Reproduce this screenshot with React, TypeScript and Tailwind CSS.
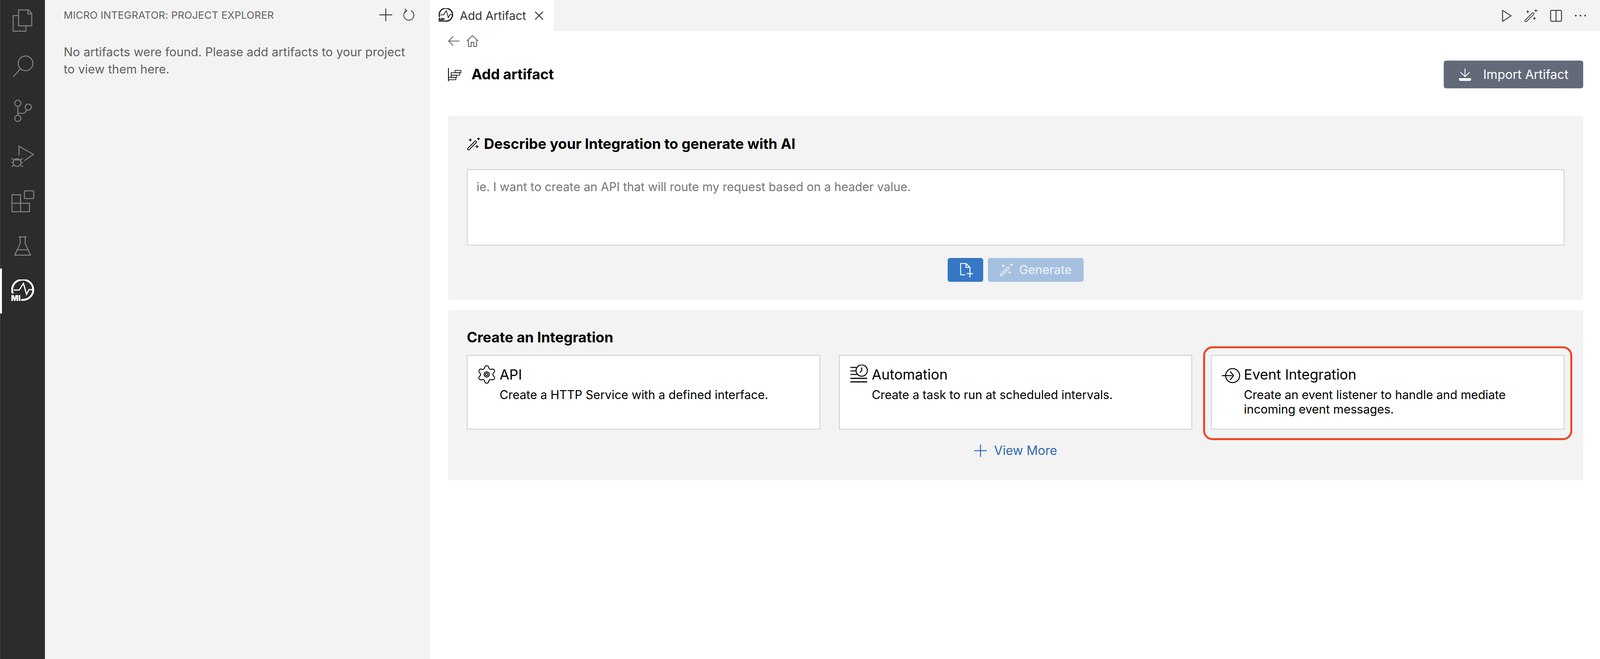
import { Settings } from 'lucide-react';

function MiLogo({ size, color }: { size: number; color: string }) {
  return (
    <svg width={size} height={size} viewBox="0 0 60 60" fill="none" stroke={color}>
      <path d="M4 36A27 26 0 1 1 25 52" strokeWidth="4.800" />
      <path d="M6 27H20L31 10L39 38L45 26H56" strokeWidth="3" />
      <text x="-1" y="55" fontSize="20" fontWeight="900" fontFamily="Inter" fill={color} stroke="none">MI</text>
    </svg>
  );
}

function Wand({ color = 'currentColor' }: { color?: string }) {
  return (
    <svg width="34" height="33" viewBox="0 0 34 33" fill="none" stroke={color} strokeWidth="2" strokeLinecap="round">
      <path d="M2.5 27.5L20.5 9.5Q22.5 8 24 9.5T24 13L6 31Q4 32 2.5 31T2.5 27.5Z" />
      <path d="M9 3V9M6 6H12M30 0.500V6M27 3H33M26 20V26M23 23H29" />
    </svg>
  );
}

const activityIcons = [
  <svg key="files" width="115" height="70" viewBox="0 18 115 70" fill="none" stroke="#858585" strokeWidth="2.500" strokeLinejoin="round">
    <path d="M46 40H33V80H66V66" />
    <path d="M47 25H72L81 34V66H47Z" />
    <path d="M71 25V35H81" />
  </svg>,
  <svg key="search" width="115" height="70" viewBox="0 133 115 70" fill="none" stroke="#858585" strokeWidth="2.500">
    <circle cx="65" cy="160" r="19" />
    <path d="M33 195L52 174" />
  </svg>,
  <svg key="git" width="115" height="70" viewBox="0 249 115 70" fill="none" stroke="#858585" strokeWidth="2.500">
    <circle cx="45" cy="263" r="8" />
    <circle cx="45" cy="302" r="8" />
    <circle cx="72" cy="273" r="8" />
    <path d="M45 271V294M45 289H58Q65 289 67 280" />
  </svg>,
  <svg key="debug" width="115" height="70" viewBox="0 363 115 70" fill="none" stroke="#858585" strokeWidth="2.500">
    <path d="M48 396V372L85 393L62 409" />
    <circle cx="43" cy="414" r="10" />
    <path d="M29 403L36 408M29 414H33M29 425L36 419M58 403L51 408M58 414H53M58 425L51 419M34 407H52" />
  </svg>,
  <svg key="extensions" width="115" height="70" viewBox="0 479 115 70" fill="none" stroke="#858585" strokeWidth="2.500" strokeLinejoin="round">
    <path d="M30 497H52V541H30ZM30 519H75V541H52" />
    <rect x="62" y="487" width="24" height="20" rx="2" />
  </svg>,
  <svg key="testing" width="115" height="70" viewBox="0 594 115 70" fill="none" stroke="#858585" strokeWidth="2.500" strokeLinejoin="round">
    <path d="M47 605H68M51 605V622L37 652H78L64 622V605M44 638H71" />
  </svg>,
];

function ActivityBar() {
  return (
    <div className="flex h-full w-[115px] shrink-0 flex-col border-l border-[#4a4a4a] bg-[#2c2c2c]">
      {activityIcons.map((icon, i) => (
        <div key={i} className={i === 0 ? 'flex h-[112px] items-center justify-center pb-[6px]' : 'flex h-[115px] items-center justify-center'}>
          {icon}
        </div>
      ))}
      <div className="relative flex h-[115px] items-center pl-[28px]">
        <div className="absolute -left-[1px] top-0 h-full w-[5px] bg-white" />
        <MiLogo size={60} color="#ffffff" />
      </div>
    </div>
  );
}

function Sidebar() {
  return (
    <div className="flex h-full w-[985px] shrink-0 flex-col bg-[#f3f3f3] pl-[48px] pr-[39px] text-[#616161]">
      <div className="flex h-[76px] items-center justify-between">
        <span className="text-[26px] tracking-[0.2px]">MICRO INTEGRATOR: PROJECT EXPLORER</span>
        <div className="flex items-center gap-[28px]">
          <svg width="33" height="32" viewBox="0 0 33 32" stroke="#424242" strokeWidth="2.500">
            <path d="M16.500 0V32M0 16H33" />
          </svg>
          <svg width="29" height="32" viewBox="0 0 29 32" fill="none" stroke="#424242" strokeWidth="2.200">
            <path d="M9 5A13 13 0 1 0 20 5" />
            <path d="M4 0.500L9.500 5.500L4 10" />
          </svg>
        </div>
      </div>
      <p className="mt-[35px] w-[890px] text-[31px] leading-[44px]">
        No artifacts were found. Please add artifacts to your project to view them here.
      </p>
    </div>
  );
}

function TabBar() {
  return (
    <div className="flex h-[80px] shrink-0 items-center justify-between bg-[#f3f3f3] pr-[35px]">
      <div className="flex h-full w-[318px] items-center bg-white pl-[23px] text-[#333333]">
        <MiLogo size={38} color="#1a1a1a" />
        <span className="ml-[16px] text-[30px]">Add Artifact</span>
        <svg className="ml-[22px]" width="22" height="22" viewBox="0 0 22 22" stroke="#424242" strokeWidth="2.500">
          <path d="M1 1L21 21M21 1L1 21" />
        </svg>
      </div>
      <div className="flex items-center gap-[32px] text-[#424242]">
        <svg width="25" height="31" viewBox="0 0 25 31" fill="none" stroke="currentColor" strokeWidth="2.500" strokeLinejoin="round">
          <path d="M1.500 1.500L23.500 15.500L1.500 29.500Z" />
        </svg>
        <Wand />
        <svg width="31" height="31" viewBox="0 0 31 31" fill="none" stroke="currentColor" strokeWidth="2.500">
          <rect x="1.500" y="1.500" width="28" height="28" rx="3" />
          <path d="M15.500 1.500V29.500" />
        </svg>
        <svg width="30" height="6" viewBox="0 0 30 6" fill="currentColor">
          <circle cx="3" cy="3" r="2.300" />
          <circle cx="15" cy="3" r="2.300" />
          <circle cx="27" cy="3" r="2.300" />
        </svg>
      </div>
    </div>
  );
}

function ActionCard({ icon, iconClass, title, description, outlined }: {
  icon: React.ReactNode;
  iconClass: string;
  title: string;
  description: string;
  outlined?: boolean;
}) {
  return (
    <div className="relative">
      <div className="flex h-[191px] border-2 border-[#cccccc] bg-white pl-[26px] pt-[26px] text-black">
        <div className={iconClass}>{icon}</div>
        <div className="max-w-[760px]">
          <div className="text-[36px] leading-[44px]">{title}</div>
          <p className="mt-[11px] text-[30.5px] leading-[37px]">{description}</p>
        </div>
      </div>
      {outlined && <div className="absolute -bottom-[27px] -left-[20px] -right-[20px] -top-[22px] rounded-[24px] border-[5px] border-[#ee4426]" />}
    </div>
  );
}

const gearIcon = (
  <Settings size={54} strokeWidth={1} color="#000000">
    <circle cx="12" cy="12" r="1.400" />
  </Settings>
);

const clockIcon = (
  <svg width="46" height="46" viewBox="0 0 46 46" fill="none" stroke="#000000" strokeWidth="2.500">
    <circle cx="30" cy="15" r="14.500" />
    <path d="M30 7V16L25 20" />
    <path d="M1 7H16M1 16H15M1 25H18" />
    <path d="M1 35H44M1 44H44" strokeWidth="3" />
  </svg>
);

const eventIcon = (
  <svg width="47" height="39" viewBox="0 0 47 39" fill="none" stroke="#000000" strokeWidth="2.500">
    <circle cx="27.500" cy="19" r="18" />
    <path d="M0 19H27M21 8L30 19L21 30" />
  </svg>
);

export default function App() {
  return (
    <div className="flex h-[1686px] w-full overflow-hidden bg-white font-['Inter',sans-serif]">
      <ActivityBar />
      <Sidebar />
      <div className="flex h-full min-w-0 flex-1 flex-col">
        <TabBar />
        <div className="flex flex-col pl-[47px] pr-[43px] pt-[10px]">
          <div className="flex h-[30px] items-center gap-[18px] text-[#616161]">
            <svg width="29" height="26" viewBox="0 0 29 26" fill="none" stroke="currentColor" strokeWidth="2.200">
              <path d="M29 13H2M13 1L1.500 13L13 25" />
            </svg>
            <svg width="31" height="30" viewBox="0 0 31 30" fill="none" stroke="currentColor" strokeWidth="2.200" strokeLinejoin="round">
              <path d="M1 15L15.500 1L30 15M5 12V29H12V18H19V29H26V12" />
            </svg>
          </div>

          <div className="mt-[35px] flex h-[71px] items-center justify-between">
            <div className="flex items-center text-black">
              <svg width="34" height="35" viewBox="0 0 34 35" fill="none" stroke="currentColor" strokeWidth="1.600">
                <path d="M1 1V35" strokeWidth="2" />
                <rect x="18" y="7" width="15" height="6" />
                <rect x="8" y="13" width="22" height="6.500" />
                <rect x="1" y="25" width="19" height="6" />
                <rect x="8" y="19.500" width="14" height="5.500" />
              </svg>
              <span className="ml-[26px] text-[36.5px] font-bold">Add artifact</span>
            </div>
            <button className="flex h-[71px] w-[357px] items-center rounded-[6px] bg-[#626a79] pl-[39px] text-white">
              <svg width="31" height="32" viewBox="0 0 31 32" fill="none" stroke="currentColor" strokeWidth="2.200">
                <path d="M15.500 0V21M4 10L15.500 21L27 10" />
                <path d="M0 25H31V28Q31 32 27 32H4Q0 32 0 28Z" fill="currentColor" stroke="none" />
              </svg>
              <span className="ml-[31px] text-[32px]">Import Artifact</span>
            </button>
          </div>

          <section className="mt-[71px] flex flex-col bg-[#f3f3f3] px-[48px] pb-[46px] pt-[53px]">
            <div className="flex h-[36px] items-center text-black">
              <Wand />
              <h2 className="ml-[10px] text-[36.5px] font-bold">Describe your Integration to generate with AI</h2>
            </div>
            <textarea
              className="mt-[47px] h-[195px] w-full resize-none border-2 border-[#cccccc] bg-white px-[23px] py-[23px] text-[30.5px] leading-[40px] outline-none placeholder:text-[#767676]"
              placeholder="ie. I want to create an API that will route my request based on a header value."
            />
            <div className="mt-[32px] flex justify-center gap-[12px]">
              <button className="flex h-[61px] w-[91px] items-center justify-center rounded-[6px] bg-[#3677c6] text-white">
                <svg className="ml-[6px] mt-[3px]" width="34" height="38" viewBox="0 0 34 38" fill="none" stroke="currentColor" strokeWidth="2.500">
                  <path d="M13 30H1V1H15L25 11V20M15 1V11H25M25 19V37M17 27H33" />
                </svg>
              </button>
              <button disabled className="flex h-[61px] w-[245px] items-center rounded-[6px] bg-[#a6c1e0] pl-[30px] text-[#f1f5fa]">
                <Wand />
                <span className="ml-[16px] text-[31px]">Generate</span>
              </button>
            </div>
          </section>

          <section className="mt-[26px] flex flex-col bg-[#f3f3f3] px-[48px] pb-[54px] pt-[50px]">
            <h2 className="h-[40px] text-[36.5px] font-bold leading-[40px] text-black">Create an Integration</h2>
            <div className="mt-[25px] grid grid-cols-3 gap-[48px]">
              <ActionCard icon={gearIcon} iconClass="-ml-[4px] -mt-[5px] mr-[6px] h-[54px] w-[54px]" title="API" description="Create a HTTP Service with a defined interface." />
              <ActionCard icon={clockIcon} iconClass="-mt-[3px] mr-[10px] w-[46px]" title="Automation" description="Create a task to run at scheduled intervals." />
              <ActionCard icon={eventIcon} iconClass="mt-[6px] mr-[9px] w-[47px]" title="Event Integration" description="Create an event listener to handle and mediate incoming event messages." outlined />
            </div>
            <div className="mt-[32px] flex h-[44px] items-center justify-center text-[#2f69b2]">
              <svg width="32" height="32" viewBox="0 0 32 32" stroke="currentColor" strokeWidth="2.500">
                <path d="M16 0V32M0 16H32" />
              </svg>
              <span className="ml-[19px] text-[32px]">View More</span>
            </div>
          </section>
        </div>
      </div>
    </div>
  );
}
